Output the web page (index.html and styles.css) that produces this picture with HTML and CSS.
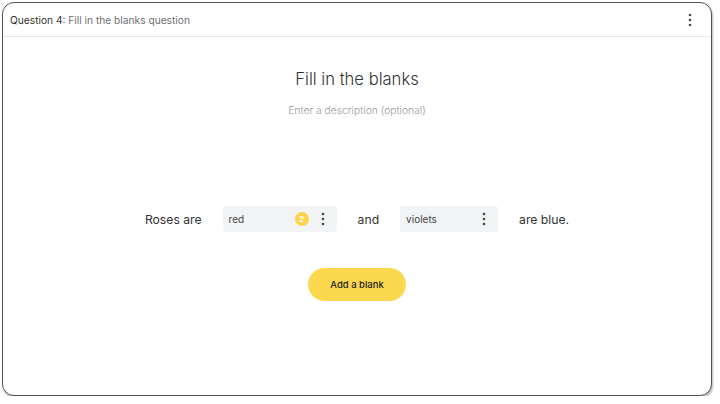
FILE: index.html
```html
<!DOCTYPE html>
<html>
<head>
<meta charset="utf-8">
<link rel="stylesheet" href="styles.css">
</head>
<body>
<div class="frame">
  <div class="header">
    <div class="htitle"><span class="qnum">Question 4:</span> Fill in the blanks question</div>
    <svg class="kebab" width="4" height="14" viewBox="0 0 4 14"><circle cx="2" cy="2" r="1.3"/><circle cx="2" cy="7" r="1.3"/><circle cx="2" cy="12" r="1.3"/></svg>
  </div>
  <div class="content">
    <div class="title">Fill in the blanks</div>
    <div class="desc">Enter a description (optional)</div>
    <div class="row">
      <span class="word">Roses are</span>
      <div class="blank b1">
        <span class="bt">red</span>
        <span class="badge">2</span>
        <svg class="kebab" width="4" height="14" viewBox="0 0 4 14"><circle cx="2" cy="2" r="1.3"/><circle cx="2" cy="7" r="1.3"/><circle cx="2" cy="12" r="1.3"/></svg>
      </div>
      <span class="word">and</span>
      <div class="blank b2">
        <span class="bt">violets</span>
        <svg class="kebab" width="4" height="14" viewBox="0 0 4 14"><circle cx="2" cy="2" r="1.3"/><circle cx="2" cy="7" r="1.3"/><circle cx="2" cy="12" r="1.3"/></svg>
      </div>
      <span class="word">are blue.</span>
    </div>
    <button class="add">Add a blank</button>
  </div>
</div>
</body>
</html>
```
FILE: styles.css
```css
html, body { margin: 0; padding: 0; background: #fff; }
body { font-family: Inter, Roboto, "Liberation Sans", sans-serif; }
.frame {
  margin: 2px 0 0 2px;
  width: 710px;
  height: 394px;
  box-sizing: border-box;
  border: 1.5px solid #505050;
  border-radius: 12px;
  box-shadow: 1px 2px 2px rgba(0,0,0,0.28);
  overflow: hidden;
  background: #fff;
}
.header {
  height: 33px;
  border-bottom: 1px solid #e8e8e8;
  display: flex;
  align-items: center;
  justify-content: space-between;
  padding: 0 19px 0 7px;
}
.htitle { font-size: 10.2px; color: #707070; }
.qnum { color: #333; }
.kebab { fill: #4a4a4a; display: block; }
.content {
  display: flex;
  flex-direction: column;
  align-items: center;
}
.title {
  margin-top: 30px;
  font-size: 16.6px;
  line-height: 24px;
  color: #333;
  font-weight: 300;
}
.desc {
  margin-top: 12px;
  font-size: 10.3px;
  line-height: 14px;
  color: #9a9a9a;
  font-weight: 300;
}
.row {
  margin-top: 89px;
  display: flex;
  align-items: center;
  gap: 21px;
  height: 26px;
}
.word { font-size: 12.2px; color: #333; font-weight: 400; }
.blank {
  height: 26px;
  background: #f1f3f4;
  border-radius: 3px;
  display: flex;
  align-items: center;
  padding: 0 12px 0 6px;
  box-sizing: border-box;
}
.b1 { width: 114px; }
.b2 { width: 98px; }
.bt { font-size: 10px; color: #444; flex: 1; }
.badge {
  width: 14px; height: 14px;
  border-radius: 50%;
  background: #fcd34d;
  color: #fff;
  font-size: 8px;
  font-weight: 700;
  display: flex; align-items: center; justify-content: center;
  margin-right: 12px;
}
.add {
  margin-top: 36px;
  width: 98px;
  height: 33px;
  border: none;
  border-radius: 17px;
  background: #fcd84e;
  color: #222;
  font-family: Inter, Roboto, "Liberation Sans", sans-serif;
  font-size: 9.5px;
  font-weight: 500;
}
```
